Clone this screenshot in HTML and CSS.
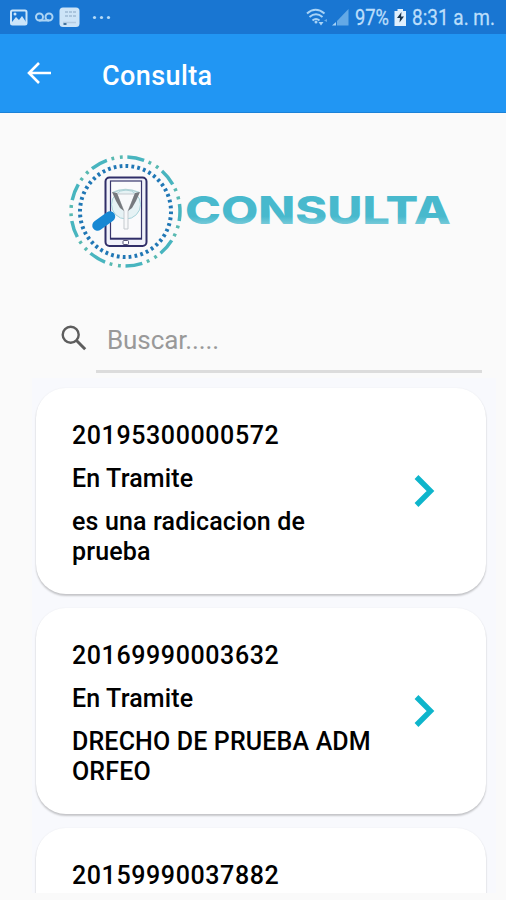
FILE: index.html
```
<!DOCTYPE html>
<html lang="es">
<head>
  <meta charset="UTF-8">
  <meta name="viewport" content="width=device-width, initial-scale=1.0">
  <title>Consulta</title>
  <link rel="stylesheet" href="styles.css">
</head>
<body>
  <!-- Status bar -->
  <div class="status-bar">
    <svg class="status-left" width="120" height="34" viewBox="0 0 120 34">
      <rect x="11" y="10.500" width="15.500" height="14" rx="1.500" fill="none" stroke="#cbe5fa" stroke-width="2"/>
      <path d="M12 22l4-5 3 3 3-4 4 6v2H12z" fill="#cbe5fa"/>
      <circle cx="15" cy="14" r="1.500" fill="#cbe5fa"/>
      <circle cx="39.500" cy="17" r="3.500" fill="none" stroke="#acd4f4" stroke-width="2"/>
      <circle cx="49" cy="17" r="3.500" fill="none" stroke="#acd4f4" stroke-width="2"/>
      <path d="M39 20.500h10" stroke="#acd4f4" stroke-width="2"/>
      <rect x="59.500" y="7.500" width="20" height="19.500" rx="3.500" fill="#cde4f7"/>
      <path d="M65 12h12M65 16h12" stroke="#9fb9d3" stroke-width="1.500" stroke-dasharray="3 1"/>
      <path d="M63 22.500h13" stroke="#b4cbe0" stroke-width="1.500"/>
      <path d="M63.500 24h3" stroke="#43749f" stroke-width="2"/>
      <g fill="#b5daf7">
        <circle cx="94.500" cy="17.500" r="1.600"/>
        <circle cx="101.500" cy="17.500" r="1.600"/>
        <circle cx="108.500" cy="17.500" r="1.600"/>
      </g>
    </svg>
    <svg class="status-right" width="200" height="34" viewBox="306 0 200 34">
      <g fill="none" stroke="#a8d3f6" stroke-width="2">
        <path d="M307 13.500q8.500-7.500 17.500 0"/>
        <path d="M309.500 17q6.500-5.500 13 0"/>
        <path d="M312.500 20.500q3.500-3 7 0"/>
      </g>
      <circle cx="316" cy="22" r="1.500" fill="#a8d3f6"/>
      <path d="M318.500 22h5l-2.500 3.500z" fill="#a8d3f6"/>
      <path d="M324 20.500l3-1.500v3z" fill="#64a9e6"/>
      <path d="M332 25.500l4-3.500v3.500z" fill="#a8d3f6"/>
      <path d="M337 21l11.500-12v16.500H337z" fill="#64a9e6"/>
      <text x="355" y="25" textLength="34" lengthAdjust="spacingAndGlyphs">97%</text>
      <path d="M397.500 9h5.500v2h3v15h-11.500V11h3z" fill="#e0f0fd"/>
      <path d="M401.500 12l-4.500 6h3l-.500 4.500 4.500-6h-3z" fill="#17334d"/>
      <text x="412" y="25" textLength="83" lengthAdjust="spacingAndGlyphs">8:31 a. m.</text>
    </svg>
  </div>

  <!-- App bar -->
  <header class="app-bar">
    <svg class="back" width="26" height="24" viewBox="0 0 26 24">
      <path d="M13 2L3 12l10 10M3 12h22" fill="none" stroke="#fff" stroke-width="2.600"/>
    </svg>
    <h1>Consulta</h1>
  </header>

  <main>
    <!-- Logo -->
    <div class="logo">
      <svg width="390" height="120" viewBox="65 150 390 120">
        <defs>
          <linearGradient id="worn" x1="0" y1="0" x2="0" y2="1">
            <stop offset="0.650" stop-color="#48b9cd"/>
            <stop offset="0.850" stop-color="#7fcddb"/>
          </linearGradient>
        </defs>
        <circle class="ring-lines" cx="125.500" cy="211.500" r="54.500" pathLength="360"/>
        <circle class="ring-marks" cx="125.500" cy="211.500" r="54.500" pathLength="360"/>
        <circle class="ring-dots" cx="125.500" cy="211.500" r="45.500" pathLength="144"/>
        <rect x="105.500" y="177.500" width="41" height="68.500" rx="4" fill="#f1f2fa" stroke="#302e68" stroke-width="2"/>
        <rect x="110.500" y="181" width="31" height="58" fill="#fafafc" stroke="#38366d" stroke-width="1.200"/>
        <path d="M110 238.500h32" stroke="#302e68" stroke-width="1.600"/>
        <rect x="123" y="240.500" width="5.500" height="4" rx="1" fill="#fff" stroke="#555477"/>
        <circle cx="126" cy="204.500" r="14.500" fill="#e6f2f5" stroke="#a7d3da"/>
        <path d="M113 192.500q12-6 26 0" fill="none" stroke="#b3d3d6" stroke-width="1.400"/>
        <path d="M117 194h18l-7 17v18h-4v-18z" fill="#f7f8fa" stroke="#c5cacf"/>
        <path d="M112 192l5 1 7 18-4-3-4-7zM140 192l-5 1-7 18 4-3 4-7z" fill="#76797e"/>
        <path d="M97.500 225.500l12.500-9" stroke="#1788d3" stroke-width="10.500" stroke-linecap="round"/>
        <text class="wordmark" x="185" y="223.500" textLength="266" lengthAdjust="spacingAndGlyphs" fill="url(#worn)">CONSULTA</text>
      </svg>
    </div>

    <!-- Search -->
    <div class="search">
      <svg width="26" height="26" viewBox="0 0 26 26">
        <circle cx="9.700" cy="9.700" r="8" fill="none" stroke="#5d5d5d" stroke-width="2.400"/>
        <path d="M15.500 15.500l8.700 8.700" stroke="#5d5d5d" stroke-width="3"/>
      </svg>
      <div class="search-field">Buscar.....</div>
    </div>

    <!-- Results -->
    <div class="list">
      <article class="card">
        <div class="card-text">
          <p class="number">20195300000572</p>
          <p>En Tramite</p>
          <p>es una radicacion de<br>prueba</p>
        </div>
        <svg class="chevron" width="21" height="32" viewBox="0 0 21 32">
          <path d="M2.500 2L16.500 16 2.500 30" fill="none" stroke="#0eb5cb" stroke-width="5.400"/>
        </svg>
      </article>
      <article class="card">
        <div class="card-text">
          <p class="number">20169990003632</p>
          <p>En Tramite</p>
          <p>DRECHO DE PRUEBA ADM<br>ORFEO</p>
        </div>
        <svg class="chevron" width="21" height="32" viewBox="0 0 21 32">
          <path d="M2.500 2L16.500 16 2.500 30" fill="none" stroke="#0eb5cb" stroke-width="5.400"/>
        </svg>
      </article>
      <article class="card">
        <div class="card-text">
          <p class="number">20159990037882</p>
        </div>
      </article>
    </div>
  </main>
</body>
</html>
```
FILE: styles.css
```
* {
  box-sizing: border-box;
}

body {
  margin: 0;
  height: 900px;
  overflow: hidden;
  font-family: Roboto, sans-serif;
  background-color: #fafafa;
}

.status-bar {
  display: flex;
  justify-content: space-between;
  height: 34px;
  background-color: #1976d2;
}

.status-bar text {
  font-size: 21.5px;
  fill: #bbdefb;
  stroke: #bbdefb;
  stroke-width: 0.3px;
}

.app-bar {
  display: flex;
  align-items: center;
  height: 79px;
  padding-left: 26px;
  background-color: #2196f3;
  border-bottom: 1px solid #1b82d8;
}

.back {
  margin-top: -1px;
}

.app-bar h1 {
  margin: 6px 0 0 50px;
  font-size: 27px;
  font-weight: 500;
  line-height: 32px;
  letter-spacing: 0.4px;
  color: #fff;
}

.logo {
  height: 157px;
  margin: 37px 0 0 65px;
}

.ring-lines,
.ring-marks,
.ring-dots {
  fill: none;
}

.ring-lines {
  stroke: #48b5bf;
  stroke-width: 3.5;
  stroke-dasharray: 18 22;
  stroke-dashoffset: 8;
}

.ring-marks {
  stroke: #58b9b1;
  stroke-width: 3.5;
  stroke-dasharray: 3 6 3 28;
  stroke-dashoffset: -15;
}

.ring-dots {
  stroke: #2077b5;
  stroke-width: 4;
  stroke-dasharray: 1.4 1.6;
}

.wordmark {
  font-family: Inter, sans-serif;
  font-size: 38.5px;
  font-weight: 800;
}

.search {
  display: flex;
  height: 71px;
  padding: 18px 24px 0 61px;
}

.search-field {
  flex: 1;
  height: 48px;
  margin-left: 9px;
  padding-left: 11px;
  border-bottom: 3px solid #dcdcdc;
  font-size: 26px;
  line-height: 30px;
  letter-spacing: -0.1px;
  color: #999;
}

.list {
  width: 464px;
  height: 515px;
  margin-left: 32px;
  padding: 10px 10px 0 4px;
  overflow: hidden;
  background-color: #f8f9fd;
}

.card {
  display: flex;
  justify-content: space-between;
  height: 206px;
  margin-bottom: 14px;
  padding: 33px 51px 0 36px;
  border-radius: 30px;
  background-color: #fff;
  box-shadow: 0 2px 2px rgba(0, 0, 0, 0.2), 0 0 2px rgba(0, 0, 0, 0.06);
}

.card p {
  margin: 0 0 13px;
  font-size: 25px;
  font-weight: 500;
  line-height: 30px;
  letter-spacing: 0.15px;
  color: #000;
  white-space: nowrap;
}

.card .number {
  letter-spacing: 0.6px;
}

.chevron {
  margin-top: 54px;
}
```
